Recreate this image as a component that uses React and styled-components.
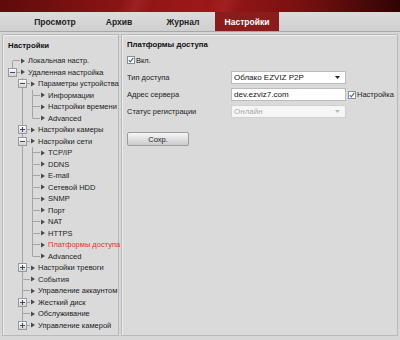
import React from "react";
import styled, { createGlobalStyle } from "styled-components";

const GlobalStyle = createGlobalStyle`
  html, body {
    margin: 0;
    padding: 0;
    background: #d7d7d7;
  }
  body {
    font-family: "Liberation Sans", Arial, sans-serif;
    font-size: 7.5px;
    color: #222;
  }
`;

const Page = styled.div`
  width: 400px;
  height: 340px;
  display: flex;
  flex-direction: column;
  overflow: hidden;
  background: #d7d7d7;
`;

// верхняя красная полоса
const Header = styled.div`
  height: 12px;
  background:
    linear-gradient(115deg, transparent 30%, rgba(255, 120, 120, 0.12) 34%, transparent 38%, transparent 52%, rgba(255, 120, 120, 0.1) 56%, transparent 60%),
    linear-gradient(90deg, #5e0b0b 0%, #851313 25%, #9e1818 50%, #7a1010 75%, #300404 100%);
`;

const TabBar = styled.div`
  height: 19px;
  display: flex;
  padding-left: 23px;
  background: linear-gradient(#dcdcdc, #cfcfcf);
  border-bottom: 1px solid #a7a7a7;
`;

const Tab = styled.div`
  width: 64px;
  display: flex;
  align-items: center;
  justify-content: center;
  font-weight: bold;
  font-size: 8.5px;
  color: ${(p) => (p.$active ? "#fff" : "#222")};
  background: ${(p) => (p.$active ? "#8a1c1c" : "transparent")};
`;

const Main = styled.div`
  flex: 1;
  display: flex;
  gap: 2px;
  padding: 2px 2px 4px 2px;
`;

const Panel = styled.div`
  border: 1px solid #b9b9b9;
  box-shadow: inset 1px 1px 0 #ececec;
  background: #dadada;
`;

const LeftPanel = styled(Panel)`
  width: 115px;
  padding-top: 5px;
`;

const RightPanel = styled(Panel)`
  flex: 1;
  padding: 4px 0 0 5px;
`;

const PanelTitle = styled.div`
  font-weight: bold;
  font-size: 7.8px;
  line-height: 12px;
  padding-left: ${(p) => p.$pad || 0}px;
  color: #111;
`;

// дерево меню
const Tree = styled.div`
  margin-top: 3px;
  padding-left: 4px;
`;

const Row = styled.div`
  height: 11.5px;
  display: flex;
  align-items: stretch;
  white-space: nowrap;
`;

const LINE = "linear-gradient(#a3a3a3, #a3a3a3)";

const Guide = styled.span`
  width: 10px;
  flex: none;
  background: ${(p) => (p.$on ? `${LINE} 5px 0 / 1px 100% no-repeat` : "none")};
`;

const Own = styled.span`
  width: 10px;
  flex: none;
  display: flex;
  align-items: center;
  background: ${(p) =>
    [
      p.$up ? `${LINE} 5px 0 / 1px 50% no-repeat` : null,
      p.$down ? `${LINE} 5px 100% / 1px 50% no-repeat` : null,
      `${LINE} 6px 50% / 4px 1px no-repeat`,
    ]
      .filter(Boolean)
      .join(", ")};
`;

const ArrowCell = styled.span`
  width: 11px;
  flex: none;
  display: flex;
  align-items: center;
  padding-left: 4px;
  box-sizing: border-box;
  background: ${LINE} 0 50% / 3px 1px no-repeat;
`;

const Label = styled.span`
  display: flex;
  align-items: center;
  color: ${(p) => (p.$active ? "#ec2c25" : "#222")};
`;

const BoxSvg = styled.svg`
  margin-left: 1px;
  display: block;
`;

function ToggleBox({ plus }) {
  return (
    <BoxSvg width="9" height="9" viewBox="0 0 9 9">
      <defs>
        <linearGradient id="tb" x1="0" y1="0" x2="0" y2="1">
          <stop offset="0" stopColor="#ffffff" />
          <stop offset="1" stopColor="#cfcfcf" />
        </linearGradient>
      </defs>
      <rect x="0.5" y="0.5" width="8" height="8" fill="url(#tb)" stroke="#9a9a9a" />
      <line x1="2" y1="4.5" x2="7" y2="4.5" stroke="#3c4a63" />
      {plus && <line x1="4.5" y1="2" x2="4.5" y2="7" stroke="#3c4a63" />}
    </BoxSvg>
  );
}

function Arrow() {
  return (
    <svg width="4" height="6" viewBox="0 0 4 6" style={{ display: "block" }}>
      <path d="M0 0.5 L4 3 L0 5.5Z" fill="#4a4a4a" />
    </svg>
  );
}

const menu = [
  { label: "Локальная настр." },
  {
    label: "Удаленная настройка",
    kids: [
      {
        label: "Параметры устройства",
        kids: [{ label: "Информации" }, { label: "Настройки времени" }, { label: "Advanced" }],
      },
      { label: "Настройки камеры", closed: true },
      {
        label: "Настройки сети",
        kids: [
          { label: "TCP/IP" },
          { label: "DDNS" },
          { label: "E-mail" },
          { label: "Сетевой HDD" },
          { label: "SNMP" },
          { label: "Порт" },
          { label: "NAT" },
          { label: "HTTPS" },
          { label: "Платформы доступа", active: true },
          { label: "Advanced" },
        ],
      },
      { label: "Настройки тревоги", closed: true },
      { label: "События" },
      { label: "Управление аккаунтом" },
      { label: "Жесткий диск", closed: true },
      { label: "Обслуживание" },
      { label: "Управление камерой", closed: true },
    ],
  },
];

function flatten(nodes, level, guides, out) {
  nodes.forEach((n, i) => {
    const last = i === nodes.length - 1;
    out.push({
      label: n.label,
      guides,
      up: !(level === 0 && i === 0),
      down: !last,
      box: n.kids ? "minus" : n.closed ? "plus" : null,
      active: n.active,
    });
    if (n.kids) flatten(n.kids, level + 1, [...guides, !last], out);
  });
  return out;
}

const rows = flatten(menu, 0, [], []);

// правая часть — форма
const CheckLine = styled.label`
  margin-top: 3px;
  height: 12px;
  display: flex;
  align-items: center;
  gap: 1px;
`;

const Box = styled.span`
  width: 8px;
  height: 8px;
  box-sizing: border-box;
  flex: none;
  border: 1px solid #8f8f8f;
  background: #fff;
  display: flex;
  align-items: center;
  justify-content: center;
`;

function Check() {
  return (
    <Box>
      <svg width="6" height="6" viewBox="0 0 6 6" style={{ display: "block" }}>
        <path d="M0.8 3.2 L2.3 4.8 L5.3 0.8" fill="none" stroke="#3b6cc0" strokeWidth="1.2" />
      </svg>
    </Box>
  );
}

const Form = styled.div`
  margin-top: 3px;
  display: grid;
  grid-template-columns: 104px 115px auto;
  grid-auto-rows: 17px;
  align-items: center;
`;

const FieldLabel = styled.span`
  color: #222;
`;

const Control = styled.div`
  height: 13px;
  box-sizing: border-box;
  border: 1px solid ${(p) => (p.$disabled ? "#d0d0d0" : "#bcbcbc")};
  background: ${(p) => (p.$disabled ? "#f6f6f6" : "#fff")};
  color: ${(p) => (p.$disabled ? "#a9a9a9" : "#111")};
  display: flex;
  align-items: center;
  justify-content: space-between;
  padding: 0 5px 0 2px;
  font-size: 8px;
  white-space: nowrap;
`;

const Side = styled.span`
  display: flex;
  align-items: center;
  gap: 1px;
  padding-left: 2px;
  white-space: nowrap;
`;

function Caret({ color }) {
  return (
    <svg width="5" height="3" viewBox="0 0 5 3" style={{ display: "block" }}>
      <path d="M0 0 H5 L2.5 3Z" fill={color} />
    </svg>
  );
}

const SaveButton = styled.button`
  margin-top: 12px;
  width: 62px;
  height: 14px;
  padding: 0;
  border: 1px solid #9c9c9c;
  border-radius: 2px;
  background: linear-gradient(#f7f7f7, #cbcbcb);
  font-family: "Liberation Sans", Arial, sans-serif;
  font-size: 7.5px;
  color: #222;
  display: block;
`;

export default function App() {
  const tabs = ["Просмотр", "Архив", "Журнал", "Настройки"];
  return (
    <>
      <GlobalStyle />
      <Page>
        <Header />
        <TabBar>
          {tabs.map((t) => (
            <Tab key={t} $active={t === "Настройки"}>
              {t}
            </Tab>
          ))}
        </TabBar>
        <Main>
          <LeftPanel>
            <PanelTitle $pad={5}>Настройки</PanelTitle>
            <Tree>
              {rows.map((r, i) => (
                <Row key={i}>
                  {r.guides.map((g, j) => (
                    <Guide key={j} $on={g} />
                  ))}
                  <Own $up={r.up} $down={r.down}>
                    {r.box && <ToggleBox plus={r.box === "plus"} />}
                  </Own>
                  <ArrowCell>
                    <Arrow />
                  </ArrowCell>
                  <Label $active={r.active}>{r.label}</Label>
                </Row>
              ))}
            </Tree>
          </LeftPanel>
          <RightPanel>
            <PanelTitle>Платформы доступа</PanelTitle>
            <CheckLine>
              <Check />
              Вкл.
            </CheckLine>
            <Form>
              <FieldLabel>Тип доступа</FieldLabel>
              <Control>
                Облако EZVIZ P2P
                <Caret color="#222" />
              </Control>
              <span />
              <FieldLabel>Адрес сервера</FieldLabel>
              <Control>dev.ezviz7.com</Control>
              <Side>
                <Check />
                Настройка
              </Side>
              <FieldLabel>Статус регистрации</FieldLabel>
              <Control $disabled>
                Онлайн
                <Caret color="#b5b5b5" />
              </Control>
              <span />
            </Form>
            <SaveButton>Сохр.</SaveButton>
          </RightPanel>
        </Main>
      </Page>
    </>
  );
}
